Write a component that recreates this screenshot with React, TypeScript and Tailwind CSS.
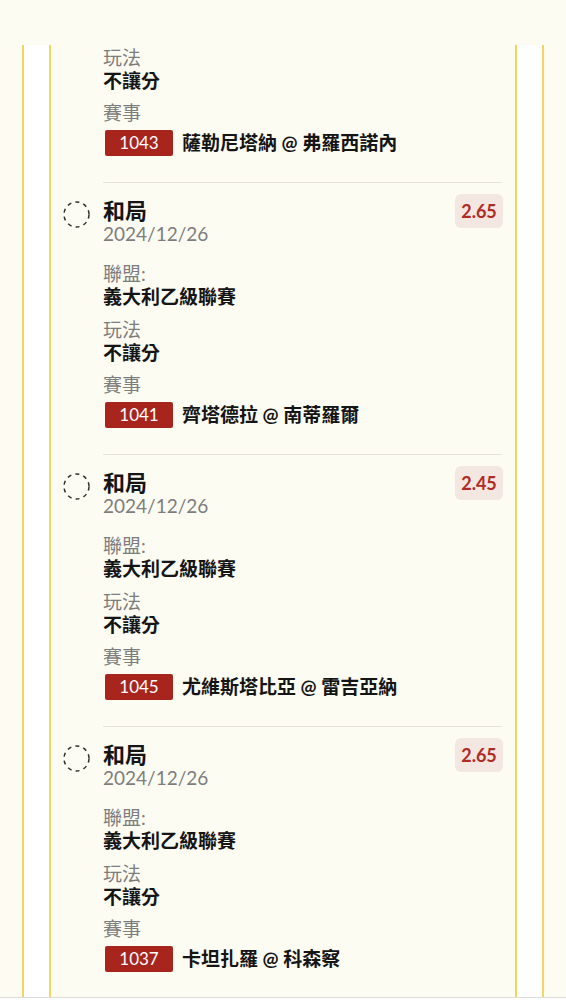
import React from 'react';

interface Bet {
  id: number;
  pick: string;
  date: string;
  odds: string;
  league: string;
  market: string;
  matchNo: string;
  match: string;
}

const bets: Bet[] = [
  { id: 2, pick: '和局', date: '2024/12/26', odds: '2.65', league: '義大利乙級聯賽', market: '不讓分', matchNo: '1041', match: '齊塔德拉 @ 南蒂羅爾' },
  { id: 3, pick: '和局', date: '2024/12/26', odds: '2.45', league: '義大利乙級聯賽', market: '不讓分', matchNo: '1045', match: '尤維斯塔比亞 @ 雷吉亞納' },
  { id: 4, pick: '和局', date: '2024/12/26', odds: '2.65', league: '義大利乙級聯賽', market: '不讓分', matchNo: '1037', match: '卡坦扎羅 @ 科森察' },
];

const DashedCircle = () => (
  <svg width="27" height="27" viewBox="0 0 27 27">
    <circle cx="13.5" cy="13.5" r="12.5" fill="none" stroke="#2e2e2e" strokeWidth="1.5" strokeDasharray="4 4.2" />
  </svg>
);

const Field = ({ label, value, className = '' }: { label: string; value: string; className?: string }) => (
  <div className={className}>
    <div className="text-[19px] leading-[23px] text-[#7d7d7d]">{label}</div>
    <div className="text-[19px] leading-[23px] font-bold text-[#151515]">{value}</div>
  </div>
);

const MatchRow = ({ no, match }: { no: string; match: string }) => (
  <>
    <div className="mt-[9px] text-[19px] leading-[23px] text-[#7d7d7d]">賽事</div>
    <div className="mt-[6px] flex h-[26px] items-center gap-[9px]">
      <span className="ml-[2px] flex h-[26px] w-[68px] items-center justify-center rounded-[2px] bg-[#a8251d] text-[17px] leading-[26px] text-white">
        {no}
      </span>
      <span className="text-[19px] leading-[26px] font-bold text-[#151515]">{match}</span>
    </div>
  </>
);

const BetItem = ({ bet }: { bet: Bet }) => (
  <div className="flex">
    <div className="mr-[13px] w-[27px] shrink-0 pt-[19px]">
      <DashedCircle />
    </div>
    <div className="flex-1 border-t border-[#e6e4dc] pb-[26px]">
      <div className="flex items-start justify-between pt-[11px]">
        <div className="pt-[5px]">
          <div className="text-[22px] leading-[24px] font-bold text-[#151515]">{bet.pick}</div>
          <div className="text-[19px] leading-[21px] text-[#7d7d7d]">{bet.date}</div>
        </div>
        <div className="-mr-px flex h-[34px] w-[48px] items-center justify-center rounded-[6px] bg-[#f4e6e1] text-[18px] font-bold text-[#b02b25]">
          {bet.odds}
        </div>
      </div>
      <Field className="mt-[18px]" label="聯盟:" value={bet.league} />
      <Field className="mt-[10px]" label="玩法" value={bet.market} />
      <MatchRow no={bet.matchNo} match={bet.match} />
    </div>
  </div>
);

export default function App() {
  return (
    <div className="min-h-screen bg-[#fdfcf3] pt-[45px] font-[Lato,'Noto_Sans_CJK_TC',sans-serif]">
      <div className="mx-[22px] border-x-2 border-[#f4d462] bg-white px-[25px]">
        <div className="border-x-2 border-[#f4d462] bg-[#fdfcf3] pl-[12px] pr-[13px]">
          {/* tail of the previous bet, scrolled off the top */}
          <div className="flex">
            <div className="mr-[13px] w-[27px] shrink-0" />
            <div className="flex-1 pt-[1px] pb-[26px]">
              <Field label="玩法" value="不讓分" />
              <MatchRow no="1043" match="薩勒尼塔納 @ 弗羅西諾內" />
            </div>
          </div>
          {bets.map((bet) => (
            <BetItem key={bet.id} bet={bet} />
          ))}
          <div className="ml-[40px] border-t border-[#e6e4dc] pb-[4px]" />
        </div>
      </div>
      <div className="fixed inset-x-0 bottom-0 h-[3px] border-t border-[#dcdcdc] bg-white" />
    </div>
  );
}
